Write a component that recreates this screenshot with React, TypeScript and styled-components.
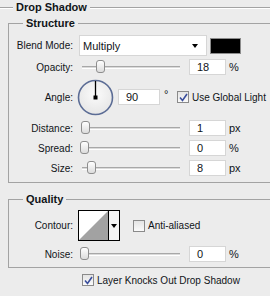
import React from "react";
import styled, { createGlobalStyle } from "styled-components";

const GlobalStyle = createGlobalStyle`
  * { box-sizing: border-box; }
  html, body { margin: 0; padding: 0; background: #ececec; overflow: hidden; }
  body {
    font-family: "Liberation Sans", Arial, sans-serif;
    font-size: 10px;
    color: #101418;
  }
`;

const Panel = styled.div`
  width: 270px;
  height: 296px;
  padding-top: 1px;
  overflow: hidden;
`;

const Header = styled.div`
  display: flex;
  align-items: center;
  height: 13px;
`;

const Etch = styled.div<{ $w?: number }>`
  height: 2px;
  border-top: 1px solid #a3a3a3;
  border-bottom: 1px solid #ffffff;
  ${(p) => (p.$w ? `width: ${p.$w}px;` : "flex: 1;")}
`;

const Heading = styled.span`
  font-weight: bold;
  font-size: 11px;
  margin: 0 3px;
  line-height: 13px;
`;

const Group = styled.fieldset<{ $mt: number; $pb: number }>`
  margin: ${(p) => p.$mt}px 0 0 8px;
  padding: 0 0 ${(p) => p.$pb}px 0;
  border: 1px solid #a3a3a3;
  border-right: none;
  min-width: 0;
`;

const Legend = styled.legend`
  margin-left: 14px;
  padding: 0 3px;
  font-weight: bold;
  font-size: 11px;
  line-height: 13px;
`;

const Row = styled.div<{ $h: number; $mt: number }>`
  display: flex;
  align-items: center;
  height: ${(p) => p.$h}px;
  margin-top: ${(p) => p.$mt}px;
`;

const Label = styled.span`
  width: 64px;
  flex-shrink: 0;
  text-align: right;
  margin-right: 6px;
`;

const Select = styled.div`
  width: 128px;
  height: 21px;
  display: flex;
  align-items: center;
  justify-content: space-between;
  padding: 0 8px 0 3px;
  background: #ffffff;
  border: 1px solid #d6d6d6;
  font-size: 11px;
`;

const Arrow = styled.span`
  width: 0;
  height: 0;
  border-left: 3.5px solid transparent;
  border-right: 3.5px solid transparent;
  border-top: 4px solid #000;
`;

const Swatch = styled.div`
  width: 31px;
  height: 16px;
  margin-left: 3px;
  background: #000;
  border: 1px solid #8c8c8c;
`;

const Track = styled.div`
  position: relative;
  width: 98px;
  height: 3px;
  margin-left: 3px;
  border-top: 1px solid #a8a8a8;
  border-bottom: 1px solid #ffffff;
  background: #dadada;
`;

const Thumb = styled.div<{ $x: number }>`
  position: absolute;
  left: ${(p) => p.$x - 4}px;
  top: -7px;
  width: 9px;
  height: 13px;
  border: 1px solid #8e8e8e;
  border-radius: 3px;
  background: linear-gradient(#ffffff, #dcdcdc);
`;

const NumBox = styled.div<{ $w: number; $ml: number }>`
  width: ${(p) => p.$w}px;
  height: 16px;
  margin-left: ${(p) => p.$ml}px;
  padding-left: 7px;
  display: flex;
  align-items: center;
  background: #ffffff;
  border: 1px solid #d6d6d6;
  font-size: 11px;
`;

const Unit = styled.span<{ $up?: boolean }>`
  margin-left: 3px;
  font-size: 11px;
  ${(p) => (p.$up ? "align-self: flex-start; margin-top: 9px; width: 13px; margin-left: 4px;" : "")}
`;

const Dial = styled.svg`
  margin-left: -2px;
  flex-shrink: 0;
`;

const Check = styled.label<{ $ml: number }>`
  display: flex;
  align-items: center;
  gap: 3px;
  margin-left: ${(p) => p.$ml}px;
  white-space: nowrap;
  font-size: 10px;
`;

const Box = styled.span`
  width: 12px;
  height: 12px;
  border: 1px solid #8a8a8a;
  background: linear-gradient(#e4e4e4, #fafafa);
  display: flex;
  align-items: center;
  justify-content: center;
`;

const Contour = styled.div`
  display: flex;
  width: 42px;
  height: 31px;
  margin-left: -1px;
  border: 1px solid #000;
`;

const ContourArrow = styled.div`
  width: 11px;
  display: flex;
  align-items: center;
  justify-content: center;
  background: #f4f4f4;
  border-left: 1px solid #000;
`;

const BottomRow = styled.div`
  margin: 6px 0 0 82px;
  display: flex;
`;

const Slider = ({ x }: { x: number }) => (
  <Track>
    <Thumb $x={x} />
  </Track>
);

const CheckBox = ({ on }: { on: boolean }) => (
  <Box>
    {on && (
      <svg width="9" height="9" viewBox="0 0 9 9">
        <path d="M1 4.5 L3.5 7.5 L8 1" stroke="#3a4e9c" strokeWidth="1.6" fill="none" />
      </svg>
    )}
  </Box>
);

const App = () => {
  return (
    <Panel>
      <GlobalStyle />
      <Header>
        <Etch $w={13} />
        <Heading>Drop Shadow</Heading>
        <Etch />
      </Header>

      <Group $mt={3} $pb={6}>
        <Legend>Structure</Legend>
        <Row $h={21} $mt={5}>
          <Label>Blend Mode:</Label>
          <Select>
            <span>Multiply</span>
            <Arrow />
          </Select>
          <Swatch />
        </Row>
        <Row $h={16} $mt={3}>
          <Label>Opacity:</Label>
          <Slider x={18} />
          <NumBox $w={37} $ml={9}>18</NumBox>
          <Unit>%</Unit>
        </Row>
        <Row $h={36} $mt={4}>
          <Label>Angle:</Label>
          <Dial width="37" height="37" viewBox="0 0 37 37">
            <defs>
              <radialGradient id="dialFill" cx="50%" cy="40%" r="60%">
                <stop offset="0%" stopColor="#fbfbfb" />
                <stop offset="100%" stopColor="#e6e6e6" />
              </radialGradient>
            </defs>
            <circle cx="18.5" cy="18.5" r="17" fill="url(#dialFill)" stroke="#5b6c95" strokeWidth="1.6" />
            <line x1="18.5" y1="18.5" x2="18.5" y2="2" stroke="#000" strokeWidth="1.3" />
            <rect x="16.5" y="16.5" width="4" height="4" fill="#000" />
          </Dial>
          <NumBox $w={42} $ml={4}>90</NumBox>
          <Unit $up>°</Unit>
          <Check $ml={0}>
            <CheckBox on />
            <span>Use Global Light</span>
          </Check>
        </Row>
        <Row $h={16} $mt={5}>
          <Label>Distance:</Label>
          <Slider x={3} />
          <NumBox $w={37} $ml={9}>1</NumBox>
          <Unit>px</Unit>
        </Row>
        <Row $h={16} $mt={4}>
          <Label>Spread:</Label>
          <Slider x={2} />
          <NumBox $w={37} $ml={9}>0</NumBox>
          <Unit>%</Unit>
        </Row>
        <Row $h={16} $mt={4}>
          <Label>Size:</Label>
          <Slider x={9} />
          <NumBox $w={37} $ml={9}>8</NumBox>
          <Unit>px</Unit>
        </Row>
      </Group>

      <Group $mt={10} $pb={5}>
        <Legend>Quality</Legend>
        <Row $h={31} $mt={4}>
          <Label>Contour:</Label>
          <Contour>
            <svg width="29" height="29" viewBox="0 0 29 29">
              <rect width="29" height="29" fill="#fff" />
              <polygon points="0,29 29,0 29,29" fill="#a2a2a2" />
            </svg>
            <ContourArrow>
              <Arrow />
            </ContourArrow>
          </Contour>
          <Check $ml={13}>
            <CheckBox on={false} />
            <span>Anti-aliased</span>
          </Check>
        </Row>
        <Row $h={16} $mt={5}>
          <Label>Noise:</Label>
          <Slider x={2} />
          <NumBox $w={37} $ml={9}>0</NumBox>
          <Unit>%</Unit>
        </Row>
      </Group>

      <BottomRow>
        <Check $ml={0}>
          <CheckBox on />
          <span>Layer Knocks Out Drop Shadow</span>
        </Check>
      </BottomRow>
    </Panel>
  );
};

export default App;
